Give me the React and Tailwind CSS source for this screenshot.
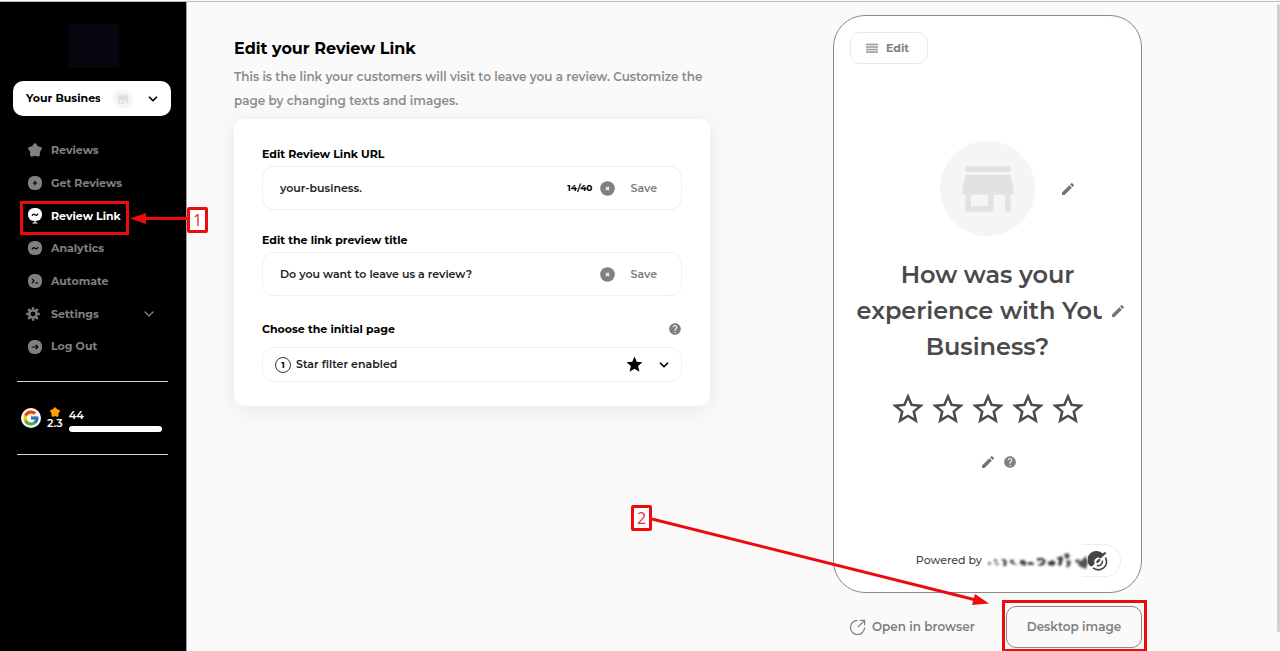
import React, { useState } from 'react';
import { ChevronDown } from 'lucide-react';
import { FcGoogle } from 'react-icons/fc';
import { MdEdit, MdHelp, MdStar, MdStarBorder, MdStore } from 'react-icons/md';

const PetalStar = ({ className }) => (
    <svg viewBox="0 0 14 14" className={className} fill="currentColor" stroke="currentColor" strokeWidth="3.4" strokeLinejoin="round">
        <path d="M7 2 8.8 4.6 12.1 5.6 10.2 8.3 10.2 11.9 7 11 3.8 11.9 3.8 8.3 1.9 5.6 5.2 4.6Z" />
    </svg>
);

// round badge with a small black glyph inside
const Badge = ({ children }) => (
    <svg viewBox="0 0 14 14" className="size-3.5" fill="none" stroke="black" strokeWidth="1.2" strokeLinecap="round" strokeLinejoin="round">
        <rect width="14" height="14" rx="6" fill="currentColor" stroke="none" />
        {children}
    </svg>
);

const LinkIcon = () => (
    <svg viewBox="0 0 14 16" className="h-4 w-3.5" fill="none" stroke="black" strokeWidth="1.2" strokeLinecap="round">
        <rect width="14" height="13" rx="6" fill="currentColor" stroke="none" />
        <path d="M7 12v3M5 15h4" stroke="currentColor" />
        <path d="M4.3 7.4c.8-1.9 1.8-1.4 2.7-.6s1.9.9 2.7-.9" />
    </svg>
);

const GearIcon = () => (
    <svg viewBox="0 0 16 16" className="size-4" fill="none" stroke="currentColor">
        <circle cx="7" cy="8" r="3.6" strokeWidth="2.4" />
        <path d="M7 1.2v2.4M7 12.4v2.4M.2 8h2.4M11.4 8h2.4M2.2 3.2l1.7 1.7M10.1 11.1l1.7 1.7M11.8 3.2l-1.7 1.7M3.9 11.1l-1.7 1.7" strokeWidth="2.4" />
    </svg>
);

const navItems = [
    { label: 'Reviews', icon: <PetalStar className="size-3.5" /> },
    { label: 'Get Reviews', icon: <Badge><path d="M7 5.2v3.6M5.2 7h3.6" /></Badge> },
    { label: 'Review Link', icon: <LinkIcon />, active: true },
    { label: 'Analytics', icon: <Badge><path d="M4.3 7.9c.8-1.9 1.8-1.4 2.7-.6s1.9.9 2.7-.9" /></Badge> },
    { label: 'Automate', icon: <Badge><path d="M4.2 5.2 6 7 4.2 8.8M7.6 9h2.2" /></Badge> },
    { label: 'Settings', icon: <GearIcon />, expandable: true },
    { label: 'Log Out', icon: <Badge><path d="M4.2 7h5.6M8 5.2 9.8 7 8 8.8" /></Badge> },
];

const Sidebar = () => {
    return (
        <aside className="w-[187px] shrink-0 bg-black border-r border-gray-400 text-white">
            <div className="mx-auto mt-[22px] h-11 w-[51px] bg-[#06060f]" />
            <button type="button" className="ml-[13px] mt-[13px] flex h-[35px] w-[158px] items-center rounded-[10px] bg-white pl-[13px] text-black">
                <span className="w-[74px] overflow-hidden whitespace-nowrap text-left text-[11px] font-bold">Your Business</span>
                <span className="ml-[13px] flex size-5 items-center justify-center rounded-full bg-[#f5f5f5]">
                    <MdStore className="size-3.5 text-[#dedede]" />
                </span>
                <ChevronDown className="ml-[13px] size-3.5" strokeWidth={3} />
            </button>

            <nav className="mt-[18px] grid h-[229px] grid-rows-7 pl-[26px] pr-[29px]">
                {navItems.map((item) => (
                    <a
                        key={item.label}
                        href="#"
                        className={`flex items-center text-[11px] font-bold ${item.active ? 'text-white' : 'text-[#808080]'}`}
                    >
                        <span className="flex w-4 justify-end">{item.icon}</span>
                        <span className="ml-[9px] grow">{item.label}</span>
                        {item.expandable && <ChevronDown className="size-4" strokeWidth={2} />}
                    </a>
                ))}
            </nav>

            <div className="ml-[17px] mt-[18px] flex h-[74px] w-[151px] items-center border-y border-gray-300 pl-1">
                <span className="flex size-5 items-center justify-center rounded-full bg-white">
                    <FcGoogle className="size-[18px]" />
                </span>
                <div className="ml-1.5 flex flex-col items-center text-[11px] font-semibold leading-3">
                    <PetalStar className="size-2.5 text-[#ffa000]" />
                    2.3
                </div>
                <div className="ml-1.5 grow pr-1.5 pt-0.5 text-[11px] font-semibold leading-4">
                    44
                    <div className="mt-[3px] h-1.5 rounded-full bg-white" />
                </div>
            </div>
        </aside>
    );
};

const TextField = ({ id, label, value, onChange, counter, className }) => (
    <div className={className}>
        <label htmlFor={id} className="block text-[11px] font-bold leading-4">{label}</label>
        <div className="mt-1 flex h-11 items-center rounded-xl border border-[#f0f0f0] pl-[17px] pr-6">
            <input
                id={id}
                value={value}
                onChange={(e) => onChange(e.target.value)}
                className="min-w-0 grow bg-transparent text-[11px] font-semibold text-[#222] outline-none"
            />
            {counter && <span className="text-[9px] font-bold">{counter}</span>}
            <button type="button" aria-label="Clear" className="ml-2 text-[#808080]">
                <svg viewBox="0 0 15 15" className="size-[15px]">
                    <circle cx="7.5" cy="7.5" r="7.3" fill="currentColor" />
                    <path d="M6 6l3 3M9 6l-3 3" stroke="white" strokeWidth="1.2" />
                </svg>
            </button>
            <button type="button" className="ml-[15px] text-[11px] font-semibold text-[#808080]">Save</button>
        </div>
    </div>
);

const EditForm = () => {
    const [url, setUrl] = useState('your-business.');
    const [title, setTitle] = useState('Do you want to leave us a review?');

    return (
        <section className="min-w-0 flex-1 pt-[35px]">
            <h1 className="text-base font-bold leading-6">Edit your Review Link</h1>
            <p className="mt-1 text-[12px] font-semibold leading-6 text-[#8c8c8c]">
                This is the link your customers will visit to leave you a review. Customize the page by changing texts and images.
            </p>
            <div className="mt-1.5 rounded-[10px] bg-white px-7 pb-6 pt-[27px] shadow-[0_4px_24px_rgba(0,0,0,0.08)]">
                <TextField id="url" label="Edit Review Link URL" value={url} onChange={setUrl} counter={`${url.length}/40`} />
                <TextField id="title" label="Edit the link preview title" value={title} onChange={setTitle} className="mt-[22px]" />
                <div className="mt-[25px] flex items-center justify-between">
                    <label htmlFor="initial" className="text-[11px] font-bold leading-4">Choose the initial page</label>
                    <MdHelp className="size-3.5 text-[#808080]" />
                </div>
                <div className="mt-2.5 flex h-[35px] items-center rounded-xl border border-[#f0f0f0] pl-3 pr-2.5">
                    <span className="flex size-4 items-center justify-center rounded-full border border-[#333] text-[9px] font-bold">1</span>
                    <select id="initial" className="ml-[5px] grow appearance-none bg-transparent text-[11px] font-semibold text-[#222] outline-none">
                        <option>Star filter enabled</option>
                    </select>
                    <MdStar className="size-[19px]" />
                    <ChevronDown className="ml-[13px] size-3.5" strokeWidth={3} />
                </div>
            </div>
        </section>
    );
};

const EditPencil = ({ label, className }) => (
    <button type="button" aria-label={label} className={className}>
        <MdEdit className="size-4 text-[#757575]" />
    </button>
);

// name of the provider, smudged out
const SmudgedBrand = () => (
    <svg viewBox="0 0 107 20" className="h-5 w-[107px]" fill="#333">
        <defs>
            <filter id="smudge" filterUnits="userSpaceOnUse" x="0" y="0" width="107" height="20">
                <feGaussianBlur stdDeviation="0.9" />
            </filter>
        </defs>
        <g filter="url(#smudge)">
            <path opacity=".6" d="M1 11h3v3H1zM7 8h3v3H7zM8 12h4v2H8z" />
            <path opacity=".9" d="M14 8h4l2 3-1 4h-3l1-4zM22 10l5-2-1 3 5 3-6-1zM33 9h4l3 3-2 3-5-2zM41 11h5l1 3h-6z" />
            <path opacity=".95" d="M50 7h6l3 3-2 4-6 1 1-2 4-2-1-2-5 1zM61 11l5-2 3 3-3 3-5-1zM69 7l6-2 1 3-2 7-3-1 1-5z" />
            <path opacity=".85" d="M77 3l4-1 2 3-2 3-3-1zM79 9l5 1-1 5-4 2 1-4zM88 9l4-1 1 3-4 1zM91 12l4-3 4-4 2 6-2 7-7-3z" />
        </g>
    </svg>
);

const HiddenEye = () => (
    <svg viewBox="0 0 20 20" className="size-5" fill="none" stroke="#444">
        <path d="M2 15A8.6 8.6 0 0 1 14.6 2.6L17 1 18.4 2.2 12.6 7.4A4 4 0 0 0 6.8 12.6L4 15.6Z" fill="#444" stroke="none" />
        <path d="M17.4 6.5A8.2 8.2 0 0 1 5 16.9M14.5 9.6a4.6 4.6 0 0 1-5.6 5" strokeWidth="1.6" />
        <path d="M8.6 11.6 12 8.2" strokeWidth="2.2" />
    </svg>
);

const Preview = () => {
    return (
        <section className="w-[309px] shrink-0 pt-[13px]">
            <div className="rounded-[32px] border border-[#888] bg-white pb-[15px] pt-4">
                <button type="button" className="ml-4 flex h-8 items-center gap-2 rounded-[10px] border border-[#eaeaea] pl-[15px] pr-[18px] text-[11px] font-bold text-[#808080]">
                    <svg viewBox="0 0 12 10" className="h-2.5 w-3" stroke="#999" strokeWidth="1.4">
                        <path d="M0 1.5h12M0 4h12M0 6.5h12M0 9h12" />
                    </svg>
                    Edit
                </button>

                <div className="mt-[77px] grid grid-cols-[1fr_auto_1fr] items-center">
                    <span />
                    <div className="flex size-[95px] items-center justify-center rounded-full bg-[#f5f5f5]">
                        <MdStore className="size-[68px] text-[#e2e2e2]" />
                    </div>
                    <EditPencil label="Edit logo" className="ml-[25px] w-4" />
                </div>

                <div className="relative mt-[21px]">
                    <h2 className="whitespace-nowrap text-center text-[24px] font-semibold leading-9 text-[#4a4a4a]">
                        How was your<br />experience with Your<br />Business?
                    </h2>
                    <EditPencil label="Edit question" className="absolute right-0 top-9 mr-px flex h-9 w-[38px] items-center bg-white pl-2" />
                </div>

                <div className="mt-[25px] flex justify-center gap-0.5 text-[#4a4a4a]">
                    {[1, 2, 3, 4, 5].map((n) => (
                        <button key={n} type="button" aria-label={`${n} stars`}>
                            <MdStarBorder className="size-[38px]" />
                        </button>
                    ))}
                </div>

                <div className="mt-[26px] grid grid-cols-[1fr_auto_1fr] items-center">
                    <span />
                    <EditPencil label="Edit rating text" className="w-4" />
                    <MdHelp className="ml-[7px] size-3.5 text-[#808080]" />
                </div>

                <div className="mr-5 mt-[74px] flex h-[33px] items-center justify-end text-[11px] font-medium text-[#444]">
                    Powered by
                    <div className="ml-[5px] flex items-center">
                        <SmudgedBrand />
                        <div className="-ml-3 flex h-[33px] items-center rounded-r-full border border-l-0 border-[#eee] pl-1.5 pr-3">
                            <HiddenEye />
                        </div>
                    </div>
                </div>
            </div>

            <div className="mt-[13px] flex items-center justify-between pl-4">
                <a href="#" className="flex items-center gap-1.5 text-[12px] font-semibold text-[#808080]">
                    <svg viewBox="0 0 18 18" className="size-[17px]" fill="none" stroke="currentColor" strokeWidth="1.3">
                        <path d="M9 1.5A7.5 7.5 0 1 0 16.5 9M9.5 8.5 16 2M11.5 1.5h5v5" />
                    </svg>
                    Open in browser
                </a>
                <button type="button" className="h-[42px] w-[136px] rounded-[10px] border border-[#888] text-[12px] font-semibold text-[#808080]">
                    Desktop image
                </button>
            </div>
        </section>
    );
};

// numbered call-outs that float over the page
const Callouts = () => (
    <div className="pointer-events-none absolute inset-0 text-[#e03030]">
        <svg className="absolute left-0 top-0 size-full" fill="none" stroke="#ee0b0b" strokeWidth="3">
            <rect x="21.5" y="202.5" width="106" height="31" />
            <path d="M188 218.5H142" />
            <path d="M130 218.5 146 213v11Z" fill="#ee0b0b" stroke="none" />
            <path d="M652 519 976 600" />
            <path d="M989 603.5 972 605 975 594Z" fill="#ee0b0b" stroke="none" />
            <rect x="1003.5" y="601.5" width="142" height="49" />
        </svg>
        <span className="absolute left-[187px] top-[207px] flex h-[26px] w-[21px] items-center justify-center rounded-xs border-3 border-[#ee0b0b] bg-white font-['Open_Sans',sans-serif] text-base">1</span>
        <span className="absolute left-[631px] top-[505px] flex h-[26px] w-[21px] items-center justify-center rounded-xs border-3 border-[#ee0b0b] bg-white font-['Open_Sans',sans-serif] text-base">2</span>
    </div>
);

const App = () => {
    return (
        <div className="relative flex min-h-screen flex-col overflow-hidden bg-[#fafafa] pt-px font-['Montserrat','Inter',sans-serif] text-black">
            <div className="flex grow border-t border-[#bdbdbd]">
                <Sidebar />
                <main className="flex min-w-0 grow gap-[123px] pl-[47px] pr-[138px]">
                    <EditForm />
                    <Preview />
                </main>
            </div>
            <div className="absolute bottom-[19px] right-0 top-1 w-[3px] rounded-full bg-[#d0d0d0]" />
            <Callouts />
        </div>
    );
};

export default App;
